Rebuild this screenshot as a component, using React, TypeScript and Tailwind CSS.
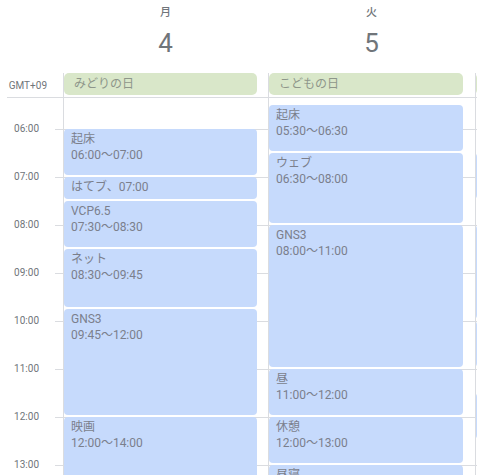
import React from 'react';

const HOUR = 48;
const START = 5;

type Ev = { start: number; end: number; title?: string; time?: string };

const days: { name: string; date: string; holiday: string; events: Ev[] }[] = [
  {
    name: '月',
    date: '4',
    holiday: 'みどりの日',
    events: [
      { start: 6, end: 7, title: '起床', time: '06:00〜07:00' },
      { start: 7, end: 7.5, title: 'はてブ、07:00' },
      { start: 7.5, end: 8.5, title: 'VCP6.5', time: '07:30〜08:30' },
      { start: 8.5, end: 9.75, title: 'ネット', time: '08:30〜09:45' },
      { start: 9.75, end: 12, title: 'GNS3', time: '09:45〜12:00' },
      { start: 12, end: 14, title: '映画', time: '12:00〜14:00' },
    ],
  },
  {
    name: '火',
    date: '5',
    holiday: 'こどもの日',
    events: [
      { start: 5.5, end: 6.5, title: '起床', time: '05:30〜06:30' },
      { start: 6.5, end: 8, title: 'ウェブ', time: '06:30〜08:00' },
      { start: 8, end: 11, title: 'GNS3', time: '08:00〜11:00' },
      { start: 11, end: 12, title: '昼', time: '11:00〜12:00' },
      { start: 12, end: 13, title: '休憩', time: '12:00〜13:00' },
      { start: 13, end: 14, title: '昼寝', time: '13:00〜14:00' },
    ],
  },
  {
    // next day, only its left edge shows in the window
    name: '',
    date: '',
    holiday: '',
    events: [
      { start: 6.5, end: 7.5 },
      { start: 8, end: 10 },
      { start: 10, end: 11 },
      { start: 11.5, end: 12.5 },
    ],
  },
];

const hours = [5, 6, 7, 8, 9, 10, 11, 12, 13];
const colWidths = ['w-[205px]', 'w-[207px]', 'w-[206px]'];
const chipPad = ['pr-[11px]', 'pr-[12px]', 'pr-[12px]'];
const evRight = ['right-[11px]', 'right-[12px]', 'right-[12px]'];

const font = { fontFamily: 'Roboto, "Noto Sans CJK JP", sans-serif' };

export default function App() {
  return (
    <div className="w-[477px] h-[475px] overflow-hidden bg-white text-[#70757a]" style={font}>
      {/* header */}
      <div className="flex">
        <div className="w-[63px] shrink-0 flex flex-col">
          <div className="h-[73px]" />
          <div className="h-[25px] ml-[7px] border-b border-[#dadce0] flex items-center justify-end pr-[16px] text-[10px]">
            GMT+09
          </div>
        </div>
        {days.map((d, i) => (
          <div key={i} className={`${colWidths[i]} shrink-0 flex flex-col`}>
            <div className="h-[73px] flex flex-col items-center pt-[6px]">
              {d.name && <div className="text-[11px] leading-[14px] font-medium">{d.name}</div>}
              {d.date && <div className="text-[26px] leading-[32px] mt-[7px]">{d.date}</div>}
            </div>
            <div className={`h-[25px] border-l border-b border-[#dadce0] ${chipPad[i]}`}>
              <div className="h-[22px] rounded-[5px] bg-[#d9e7c9] pl-[10px] text-[12px] leading-[22px] text-[#8e968a] whitespace-nowrap">
                {d.holiday}
              </div>
            </div>
          </div>
        ))}
      </div>

      {/* body */}
      <div className="h-[377px] overflow-hidden">
        <div className="flex mt-[-17px]">
          <div className="w-[63px] shrink-0 flex flex-col">
            {hours.map((h) => (
              <div key={h} className="h-[48px] flex items-start">
                <div className="flex-1 text-right pr-[16px] text-[10px] leading-[12px] -translate-y-1/2">
                  {h > 5 ? `${String(h).padStart(2, '0')}:00` : ''}
                </div>
                <div className="w-[8px] border-t border-[#dadce0]" />
              </div>
            ))}
          </div>
          {days.map((d, i) => (
            <div key={i} className={`${colWidths[i]} shrink-0 relative border-l border-[#dadce0]`}>
              {hours.map((h) => (
                <div key={h} className="h-[48px] border-t border-[#dadce0]" />
              ))}
              {d.events.map((e, j) => (
                <div
                  key={j}
                  className={`absolute left-0 ${evRight[i]} rounded-[4px] bg-[#c6dafc] pl-[7px] pt-[2px] text-[12px] leading-[16px] text-[#7b7f8c] overflow-hidden whitespace-nowrap`}
                  style={{ top: (e.start - START) * HOUR, height: (e.end - e.start) * HOUR - 2 }}
                >
                  {e.title && <div>{e.title}</div>}
                  {e.time && <div>{e.time}</div>}
                </div>
              ))}
            </div>
          ))}
        </div>
      </div>
    </div>
  );
}
